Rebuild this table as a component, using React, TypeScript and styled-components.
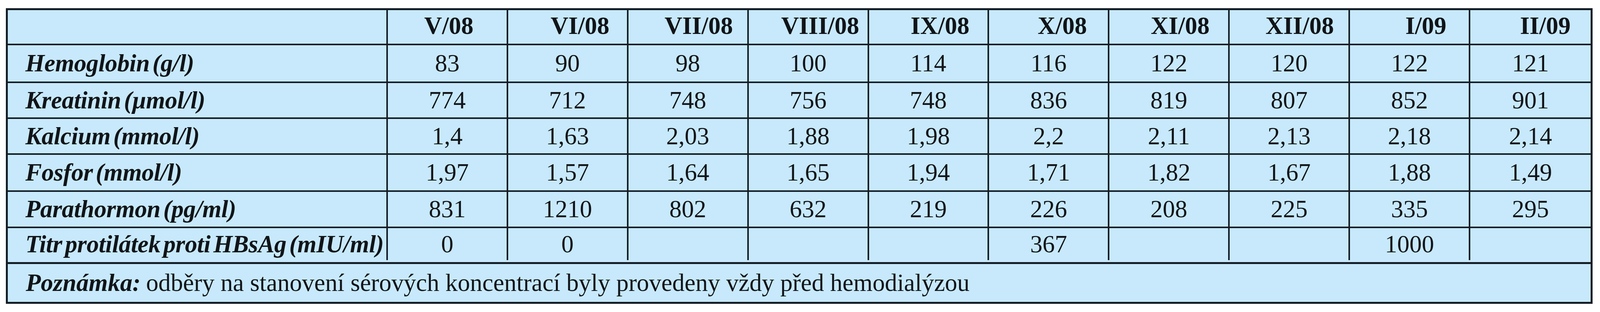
import React from "react";
import styled, { createGlobalStyle } from "styled-components";

const LINE = "#141d26";
const BG = "#c7e9fb";

const Global = createGlobalStyle`
  html, body { margin: 0; padding: 0; background: #ffffff; }
  body { font-family: "Liberation Serif", "Times New Roman", serif; color: #111418; }
`;

const Page = styled.div`
  padding: 21px 0 0 15px;
`;

const Table = styled.div`
  width: 4062px;
  box-sizing: border-box;
  border: 5px solid ${LINE};
  background: ${BG};
  font-family: "Liberation Serif", "Times New Roman", serif;
  font-size: 63px;
  line-height: 1;
`;

const Grid = styled.div`
  display: grid;
  grid-template-columns: 973px repeat(10, 1fr);
  grid-template-rows: 90px 97px 92px 92px 95px 93px 87px;
`;

const Cell = styled.div<{ $last?: boolean; $tail?: boolean; $label?: boolean; $head?: boolean; $shift?: number }>`
  box-sizing: border-box;
  display: flex;
  align-items: center;
  justify-content: ${(p) => (p.$label ? "flex-start" : "center")};
  padding-left: ${(p) => (p.$label ? "45px" : `${p.$shift ?? 0}px`)};
  padding-bottom: ${(p) => (p.$head ? "6px" : "0")};
  border-right: ${(p) => (p.$last ? "none" : `4px solid ${LINE}`)};
  border-bottom: ${(p) => (p.$tail ? "none" : `4px solid ${LINE}`)};
  margin-bottom: ${(p) => (p.$tail ? "5px" : "0")};
  font-weight: ${(p) => (p.$label || p.$head ? 700 : 400)};
  font-style: ${(p) => (p.$label ? "italic" : "normal")};
  letter-spacing: ${(p) => (p.$label ? "-0.4px" : "0")};
  word-spacing: ${(p) => (p.$label ? "-8px" : "0")};
  white-space: nowrap;
`;

const Note = styled.div`
  box-sizing: border-box;
  height: 102px;
  border-top: 5px solid ${LINE};
  display: flex;
  align-items: center;
  padding-left: 46px;
  white-space: nowrap;
`;

const NoteLabel = styled.span`
  font-weight: 700;
  font-style: italic;
  margin-right: 14px;
`;

const months = ["V/08", "VI/08", "VII/08", "VIII/08", "IX/08", "X/08", "XI/08", "XII/08", "I/09", "II/09"];
const headShift = [8, 64, 56, 62, 60, 70, 58, 54, 84, 76];

const rows: { label: string; values: string[] }[] = [
  { label: "Hemoglobin (g/l)", values: ["83", "90", "98", "100", "114", "116", "122", "120", "122", "121"] },
  { label: "Kreatinin (µmol/l)", values: ["774", "712", "748", "756", "748", "836", "819", "807", "852", "901"] },
  { label: "Kalcium (mmol/l)", values: ["1,4", "1,63", "2,03", "1,88", "1,98", "2,2", "2,11", "2,13", "2,18", "2,14"] },
  { label: "Fosfor (mmol/l)", values: ["1,97", "1,57", "1,64", "1,65", "1,94", "1,71", "1,82", "1,67", "1,88", "1,49"] },
  { label: "Parathormon (pg/ml)", values: ["831", "1210", "802", "632", "219", "226", "208", "225", "335", "295"] },
  { label: "Titr protilátek proti HBsAg (mIU/ml)", values: ["0", "0", "", "", "", "367", "", "", "1000", ""] },
];

export default function App() {
  return (
    <Page>
      <Global />
      <Table>
        <Grid>
          <Cell $label />
          {months.map((m, i) => (
            <Cell key={m} $head $shift={headShift[i]} $last={i === months.length - 1}>
              {m}
            </Cell>
          ))}
          {rows.map((r, ri) => {
            const tail = ri === rows.length - 1;
            return (
              <React.Fragment key={r.label}>
                <Cell $label $tail={tail}>
                  {r.label}
                </Cell>
                {r.values.map((v, i) => (
                  <Cell key={i} $tail={tail} $last={i === r.values.length - 1}>
                    {v}
                  </Cell>
                ))}
              </React.Fragment>
            );
          })}
        </Grid>
        <Note>
          <NoteLabel>Poznámka:</NoteLabel>
          odběry na stanovení sérových koncentrací byly provedeny vždy před hemodialýzou
        </Note>
      </Table>
    </Page>
  );
}
